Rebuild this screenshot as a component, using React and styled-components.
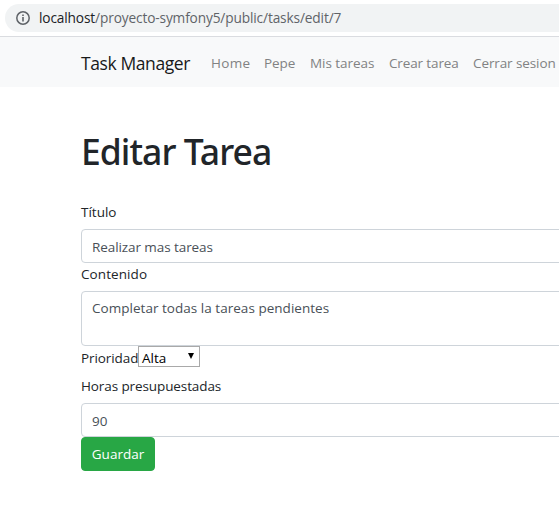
import React from "react";
import styled, { createGlobalStyle } from "styled-components";

const GlobalStyle = createGlobalStyle`
  * { box-sizing: border-box; }
  html, body { margin: 0; background: #fff; overflow: hidden; }
  body { font: 400 14px/21px "Open Sans", "Noto Sans", sans-serif; color: #212529; }
`;

const Page = styled.div`
  height: 509px;
  overflow: hidden;
`;

const BrowserBar = styled.header`
  height: 37px;
  padding: 4px 0 0 5px;
  border-bottom: 1px solid #dadce0;
`;

const AddressBar = styled.div`
  display: flex;
  align-items: center;
  height: 28px;
  padding-left: 11px;
  border-radius: 14px 0 0 14px;
  background: #f1f3f4;
  white-space: nowrap;
`;

const InfoIcon = styled.svg`
  width: 14px;
  height: 14px;
  margin-right: 9px;
  flex: none;
`;

const Url = styled.span`
  color: #5f6368;
  font-size: 13.7px;
  line-height: 19px;
  margin-top: -1px;
  letter-spacing: ${(p) => p.$spacing}px;
`;

const Host = styled.span`
  color: #202124;
`;

const Navbar = styled.nav`
  display: flex;
  align-items: center;
  height: 50px;
  padding: 2px 0 0 81px;
  background: #f8f9fa;
  white-space: nowrap;
`;

const Brand = styled.a`
  flex: none;
  width: 130px;
  color: #18191a;
  font-size: 17.5px;
  letter-spacing: ${(p) => p.$spacing}px;
`;

const NavLink = styled.a`
  flex: none;
  width: ${(p) => p.$width}px;
  color: #818283;
  font-size: 13.5px;
  letter-spacing: ${(p) => p.$spacing}px;
`;

const Content = styled.main`
  width: 720px;
  padding: 40px 0 0 81px;
`;

const Title = styled.h1`
  margin: 0 0 26px;
  font: 500 35.5px/48px "Noto Sans", "Open Sans", sans-serif;
  letter-spacing: ${(p) => p.$spacing}px;
`;

const Form = styled.form`
  display: flex;
  flex-direction: column;
  align-items: flex-start;
`;

const Label = styled.label`
  height: ${(p) => p.$height || 28}px;
  line-height: 22px;
  font-size: 13.5px;
  letter-spacing: ${(p) => p.$spacing}px;
`;

const Field = styled.input`
  width: 100%;
  height: 34px;
  padding: 2px 10px 0;
  border: 1px solid #ced4da;
  border-radius: 4px;
  outline: none;
  background: #fff;
  color: #495057;
  font: 400 13.5px/21px "Open Sans", sans-serif;
  letter-spacing: ${(p) => p.$spacing}px;
`;

const TextArea = styled(Field)`
  height: 55px;
  padding-top: 6px;
  resize: none;
  overflow: hidden;
`;

const PriorityRow = styled.div`
  display: flex;
  height: 29px;
`;

const PriorityLabel = styled(Label)`
  width: 57px;
  padding-top: 1px;
`;

const Select = styled.button`
  display: flex;
  justify-content: space-between;
  width: 62px;
  height: 21px;
  padding: 2px 4px 0 3px;
  border: 1px solid #a9a9a9;
  border-radius: 0;
  background: #fff;
  color: #000;
  font: 400 13.5px/19px "Open Sans", sans-serif;
  letter-spacing: ${(p) => p.$spacing}px;
`;

const Arrow = styled.svg`
  width: 8px;
  height: 8px;
  margin-top: 3px;
`;

const SubmitButton = styled.button`
  width: 74px;
  height: 34px;
  padding: 0;
  border: 1px solid #28a745;
  border-radius: 4px;
  background: #28a745;
  color: #fff;
  font: 400 13.5px/21px "Open Sans", sans-serif;
  letter-spacing: ${(p) => p.$spacing}px;
`;

const links = [
  { text: "Home", width: 53, spacing: 0.3 },
  { text: "Pepe", width: 46, spacing: -0.1 },
  { text: "Mis tareas", width: 79, spacing: -0.05 },
  { text: "Crear tarea", width: 84, spacing: -0.13 },
  { text: "Cerrar sesion", width: 90, spacing: -0.1 },
];

export default function App() {
  return (
    <Page>
      <GlobalStyle />
      <BrowserBar>
        <AddressBar>
          <InfoIcon viewBox="0 0 14 14">
            <circle cx="7" cy="7" r="6.2" fill="none" stroke="#5f6368" strokeWidth="1.5" />
            <path d="M6.2 6.1h1.6v4.3H6.2zM6.2 3.5h1.6v1.6H6.2z" fill="#5f6368" />
          </InfoIcon>
          <Url $spacing={-0.14}><Host>localhost</Host>/proyecto-symfony5/public/tasks/edit/7</Url>
        </AddressBar>
      </BrowserBar>
      <Navbar>
        <Brand $spacing={-0.4}>Task Manager</Brand>
        {links.map((l) => (
          <NavLink key={l.text} $width={l.width} $spacing={l.spacing}>{l.text}</NavLink>
        ))}
      </Navbar>
      <Content>
        <Title $spacing={-0.97}>Editar Tarea</Title>
        <Form>
          <Label $spacing={0}>Título</Label>
          <Field $spacing={-0.08} defaultValue="Realizar mas tareas" />
          <Label $spacing={0.08}>Contenido</Label>
          <TextArea as="textarea" $spacing={0.03} defaultValue="Completar todas la tareas pendientes" />
          <PriorityRow>
            <PriorityLabel $spacing={-0.08}>Prioridad</PriorityLabel>
            <Select type="button" $spacing={-0.02}>
              Alta
              <Arrow viewBox="0 0 8 8"><path d="M1 1h6L4 7z" fill="#000" /></Arrow>
            </Select>
          </PriorityRow>
          <Label $spacing={-0.1}>Horas presupuestadas</Label>
          <Field $spacing={0} defaultValue="90" />
          <SubmitButton type="button" $spacing={0}>Guardar</SubmitButton>
        </Form>
      </Content>
    </Page>
  );
}
